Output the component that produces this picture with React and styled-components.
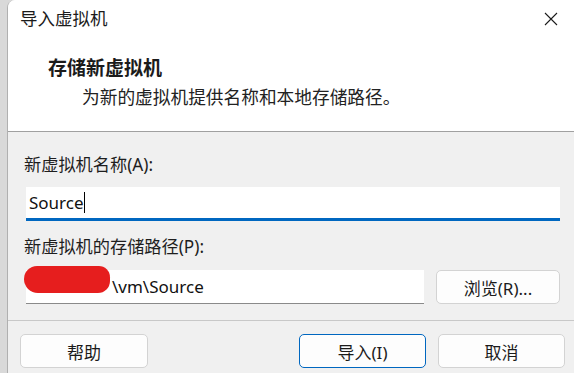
import React from 'react'
import styled, { createGlobalStyle } from 'styled-components'

const GlobalStyle = createGlobalStyle`
  html, body {
    margin: 0;
    padding: 0;
    background: #d9d9d9;
    overflow: hidden;
  }
  body {
    font-family: "Noto Sans", "Noto Sans CJK SC", sans-serif;
    color: #1b1b1b;
  }
`

function App() {
  return (
    <>
      <GlobalStyle />
      <DIALOG>
        <TitleBar>
          <span>导入虚拟机</span>
          <CloseBtn>
            <svg width="14" height="14" viewBox="0 0 14 14">
              <path d="M1 1 L13 13 M13 1 L1 13" stroke="#1b1b1b" strokeWidth="1.1" fill="none" />
            </svg>
          </CloseBtn>
        </TitleBar>
        <Header>
          <h1>存储新虚拟机</h1>
          <p>为新的虚拟机提供名称和本地存储路径。</p>
        </Header>
        <Body>
          <Label>新虚拟机名称(A):</Label>
          <Field $focused>
            Source<Caret />
          </Field>
          <Label $top={14}>新虚拟机的存储路径(P):</Label>
          <PathRow>
            <Field $grow>
              <Redact />
              <span className='path'>\vm\Source</span>
            </Field>
            <Button $w={124}>浏览(R)...</Button>
          </PathRow>
        </Body>
        <Footer>
          <Button $w={128}>帮助</Button>
          <Spacer />
          <Button $w={127} $primary>导入(I)</Button>
          <Button $w={127}>取消</Button>
        </Footer>
      </DIALOG>
    </>
  )
}

export default App

const DIALOG = styled.div`
  margin-left: 7px;
  height: 373px;
  border-left: 1px solid #b0b0b0;
  border-top-left-radius: 8px;
  overflow: hidden;
  background: #f0f0f0;
  display: flex;
  flex-direction: column;
`

const TitleBar = styled.div`
  height: 38px;
  background: #ffffff;
  display: flex;
  align-items: center;
  justify-content: space-between;
  padding-left: 12px;
  font-size: 17.5px;
  span{
    line-height: 38px;
    margin-top: -2px;
  }
`

const CloseBtn = styled.div`
  width: 46px;
  height: 38px;
  display: flex;
  align-items: center;
  justify-content: center;
  margin-right: 0;
  margin-top: -1px;
`

const Header = styled.div`
  background: #ffffff;
  height: 93px;
  border-bottom: 1px solid #a0a0a0;
  padding-left: 40px;
  h1{
    margin: 17px 0 0 0;
    font-size: 19px;
    font-weight: 700;
    line-height: 26px;
  }
  p{
    margin: 3px 0 0 34px;
    font-size: 17.7px;
    line-height: 26px;
    color: #222;
  }
`

const Body = styled.div`
  padding: 21px 14px 0 16px;
  height: 189px;
  border-bottom: 1px solid #c8c8c8;
  box-sizing: border-box;
  display: flex;
  flex-direction: column;
`

const Label = styled.div`
  font-size: 17.2px;
  line-height: 24px;
  margin-top: ${p => p.$top || 0}px;
  margin-bottom: 10px;
  color: #1e1e1e;
`

const Field = styled.div`
  position: relative;
  height: 34px;
  box-sizing: border-box;
  background: #ffffff;
  border-bottom: ${p => p.$focused ? '3px solid #0067c0' : '1px solid #8a8a8a'};
  display: flex;
  align-items: center;
  padding-left: 3px;
  margin-left: 2px;
  font-size: 17px;
  color: #111;
  flex: ${p => p.$grow ? '1' : 'none'};
  .path{
    margin-left: 83px;
  }
`

const Caret = styled.span`
  display: inline-block;
  width: 1px;
  height: 21px;
  background: #000;
`

const Redact = styled.span`
  position: absolute;
  left: -2px;
  top: -4px;
  width: 86px;
  height: 27px;
  background: #e61e1e;
  border-radius: 14px 12px 13px 15px;
`

const PathRow = styled.div`
  display: flex;
  align-items: center;
  gap: 12px;
  height: 36px;
`

const Button = styled.div`
  width: ${p => p.$w}px;
  height: 34px;
  box-sizing: border-box;
  border: 1px solid ${p => p.$primary ? '#0067c0' : '#d3d3d3'};
  border-radius: 5px;
  background: #fdfdfd;
  display: flex;
  align-items: center;
  justify-content: center;
  font-size: 17px;
  color: #1b1b1b;
  flex: none;
`

const Footer = styled.div`
  display: flex;
  align-items: center;
  gap: 12px;
  padding: 13px 9px 0 12px;
`

const Spacer = styled.div`
  flex: 1;
`
